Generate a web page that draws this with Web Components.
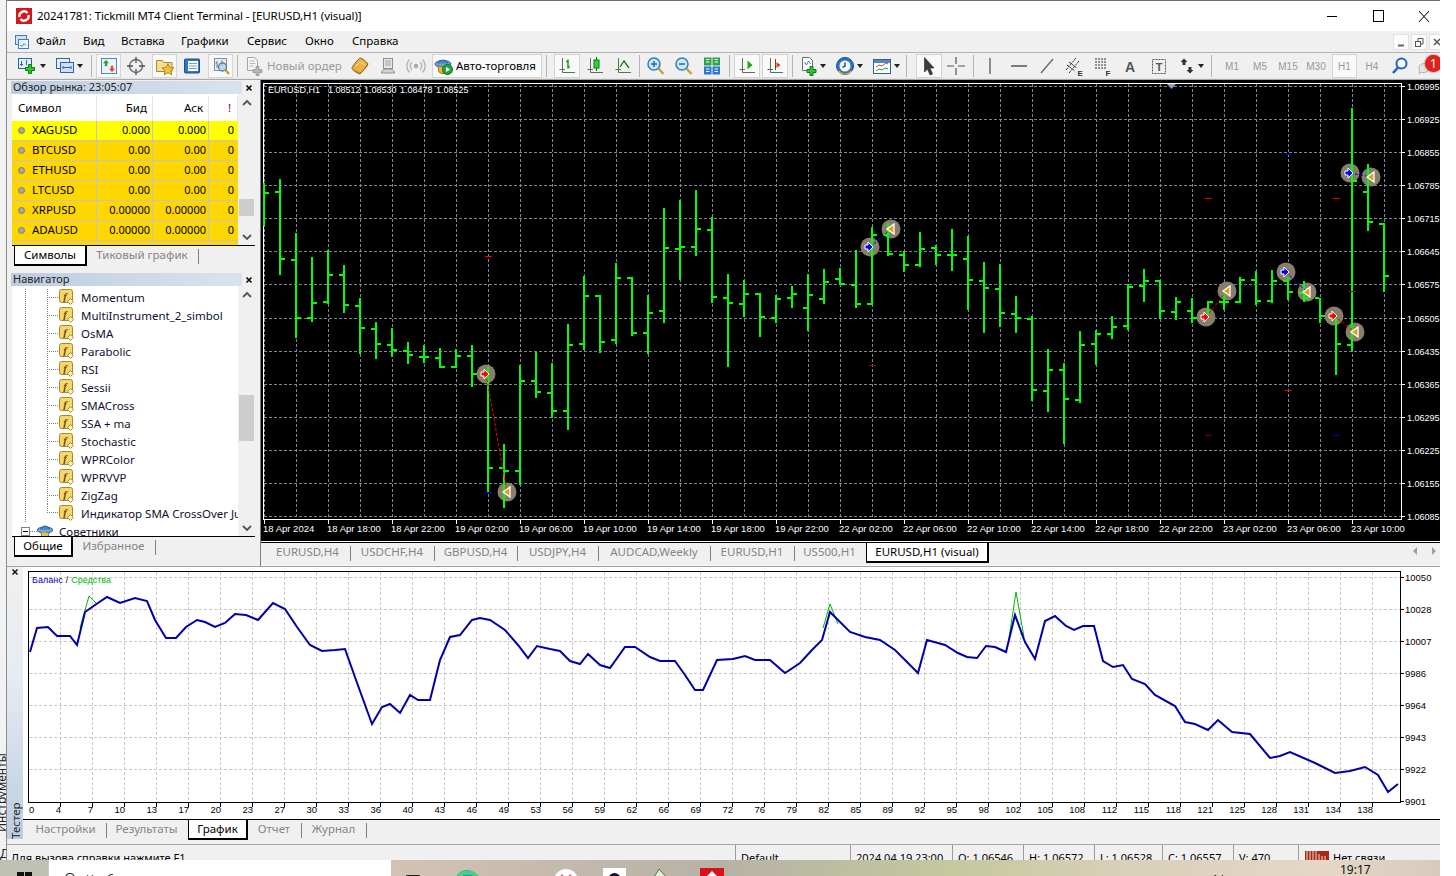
<!DOCTYPE html>
<html lang="ru">
<head>
<meta charset="utf-8">
<title>MT4</title>
<style>
  html, body { margin: 0; padding: 0; background: #fff; }
  body {
    width: 1456px; height: 876px; overflow: hidden;
    font: 11.5px "Noto Sans", "Liberation Sans", sans-serif; color: #000;
    display: grid; grid-template-rows: 860px 16px;
  }
</style>
</head>
<body>
<mt-desktop>
  <mt-strip></mt-strip>
  <mt-window>
    <mt-titlebar label="20241781: Tickmill MT4 Client Terminal - [EURUSD,H1 (visual)]"></mt-titlebar>
    <mt-menubar>
      <mt-menu style="width:47px">Файл</mt-menu>
      <mt-menu style="width:38px">Вид</mt-menu>
      <mt-menu style="width:60px">Вставка</mt-menu>
      <mt-menu style="width:66px">Графики</mt-menu>
      <mt-menu style="width:58px">Сервис</mt-menu>
      <mt-menu style="width:47px">Окно</mt-menu>
      <mt-menu style="width:60px">Справка</mt-menu>
    </mt-menubar>
    <mt-toolbar>
      <mt-tool icon="newchart" style="margin-left:10px;width:20px"></mt-tool>
      <mt-drop style="width:12px"></mt-drop>
      <mt-tool icon="profiles" style="margin-left:6px;width:19px"></mt-tool>
      <mt-drop style="width:12px"></mt-drop>
      <mt-sep style="width:10px"></mt-sep>
      <mt-tool icon="market" pressed style="width:25px"></mt-tool>
      <mt-tool icon="target" style="width:30px"></mt-tool>
      <mt-tool icon="favorites" pressed style="margin-left:1px;width:25px"></mt-tool>
      <mt-tool icon="terminal" style="width:30px"></mt-tool>
      <mt-tool icon="tester" pressed style="margin-left:1px;width:25px"></mt-tool>
      <mt-sep style="width:8px"></mt-sep>
      <mt-tool icon="neworder" style="margin-left:4px;width:18px"></mt-tool>
      <mt-tool muted style="margin-left:4px;width:77px;justify-content:flex-start">Новый ордер</mt-tool>
      <mt-tool icon="gold" style="width:32px"></mt-tool>
      <mt-tool icon="person" style="width:24px"></mt-tool>
      <mt-tool icon="signal" style="margin-left:4px;width:24px"></mt-tool>
      <mt-tool icon="auto" pressed style="margin-left:4px;width:110px;justify-content:flex-start">Авто-торговля</mt-tool>
      <mt-sep style="width:8px"></mt-sep>
      <mt-tool icon="bars" pressed style="margin-left:4px;width:26px"></mt-tool>
      <mt-tool icon="candles" style="width:30px"></mt-tool>
      <mt-tool icon="line" style="width:26px"></mt-tool>
      <mt-sep style="width:6px"></mt-sep>
      <mt-tool icon="zoomin" style="width:28px"></mt-tool>
      <mt-tool icon="zoomout" style="width:28px"></mt-tool>
      <mt-tool icon="tile" style="width:28px"></mt-tool>
      <mt-sep style="width:6px"></mt-sep>
      <mt-tool icon="shift" pressed style="margin-left:2px;width:26px"></mt-tool>
      <mt-tool icon="scroll" pressed style="margin-left:2px;width:26px"></mt-tool>
      <mt-sep style="width:8px"></mt-sep>
      <mt-tool icon="indicators" style="margin-left:3px;width:20px"></mt-tool>
      <mt-drop style="width:8px"></mt-drop>
      <mt-tool icon="clock" style="margin-left:8px;width:20px"></mt-tool>
      <mt-drop style="width:10px"></mt-drop>
      <mt-tool icon="template" style="margin-left:7px;width:20px"></mt-tool>
      <mt-drop style="width:10px"></mt-drop>
      <mt-sep style="width:8px"></mt-sep>
      <mt-tool icon="cursor" pressed style="margin-left:6px;width:26px"></mt-tool>
      <mt-tool icon="cross" style="width:28px"></mt-tool>
      <mt-sep style="width:6px"></mt-sep>
      <mt-tool icon="vline" style="width:28px"></mt-tool>
      <mt-tool icon="hline" style="width:30px"></mt-tool>
      <mt-tool icon="trend" style="width:26px"></mt-tool>
      <mt-tool icon="channel" style="width:28px"></mt-tool>
      <mt-tool icon="fibo" style="width:28px"></mt-tool>
      <mt-tool icon="letter" style="width:28px"></mt-tool>
      <mt-tool icon="label" style="width:30px"></mt-tool>
      <mt-tool icon="arrows" style="margin-left:2px;width:22px"></mt-tool>
      <mt-drop style="width:6px"></mt-drop>
      <mt-sep style="width:14px"></mt-sep>
      <mt-tool period style="width:28px">M1</mt-tool>
      <mt-tool period style="width:28px">M5</mt-tool>
      <mt-tool period style="width:28px">M15</mt-tool>
      <mt-tool period style="width:28px">M30</mt-tool>
      <mt-tool period pressed style="margin-left:2px;width:25px">H1</mt-tool>
      <mt-tool period style="width:30px">H4</mt-tool>
      <mt-tool icon="search" style="width:26px"></mt-tool>
      <mt-tool icon="bubble" style="width:27px"><mt-badge>1</mt-badge></mt-tool>
    </mt-toolbar>
    <mt-workspace>
      <mt-dock>
        <mt-market-watch></mt-market-watch>
        <mt-navigator></mt-navigator>
      </mt-dock>
      <mt-chart-area>
        <mt-chart></mt-chart>
        <mt-tabbar scroll>
          <mt-tab style="margin-left:5px;width:85px">EURUSD,H4</mt-tab>
          <mt-tab style="width:84px">USDCHF,H4</mt-tab>
          <mt-tab style="width:83px">GBPUSD,H4</mt-tab>
          <mt-tab style="width:81px">USDJPY,H4</mt-tab>
          <mt-tab style="width:112px">AUDCAD,Weekly</mt-tab>
          <mt-tab style="width:84px">EURUSD,H1</mt-tab>
          <mt-tab plain style="width:71px">US500,H1</mt-tab>
          <mt-tab active style="width:123px">EURUSD,H1 (visual)</mt-tab>
        </mt-tabbar>
      </mt-chart-area>
    </mt-workspace>
    <mt-tester>
      <mt-balance></mt-balance>
      <mt-tabbar>
        <mt-tab style="margin-left:3px;width:81px">Настройки</mt-tab>
        <mt-tab plain style="width:81px">Результаты</mt-tab>
        <mt-tab active style="width:60px">График</mt-tab>
        <mt-tab style="width:54px">Отчет</mt-tab>
        <mt-tab style="width:65px">Журнал</mt-tab>
      </mt-tabbar>
    </mt-tester>
    <mt-statusbar>
      <mt-cell style="width:729px">Для вызова справки нажмите F1</mt-cell>
      <mt-cell style="width:115px">Default</mt-cell>
      <mt-cell style="width:102px">2024.04.19 23:00</mt-cell>
      <mt-cell style="width:71px">O: 1.06546</mt-cell>
      <mt-cell style="width:71px">H: 1.06572</mt-cell>
      <mt-cell style="width:68px">L: 1.06528</mt-cell>
      <mt-cell style="width:71px">C: 1.06557</mt-cell>
      <mt-cell style="width:65px">V: 470</mt-cell>
      <mt-cell conn style="width:134px">Нет связи</mt-cell>
    </mt-statusbar>
  </mt-window>
</mt-desktop>
<mt-taskbar></mt-taskbar>

<script>
// base class: own open shadow root, filled once on connect
class Shadowed extends HTMLElement {
  connectedCallback() {
    if (this.shadowRoot) return;
    this.attachShadow({ mode: 'open' });
    this.shadowRoot.innerHTML = `<style>${this.css()}</style>${this.html()}`;
  }
  css() { return ':host{display:block}'; }
  html() { return '<slot></slot>'; }
}
const reg = (name, css, html) => customElements.define(name, class extends Shadowed {
  css() { return typeof css === 'function' ? css.call(this) : css; }
  html() { return html ? html.call(this) : '<slot></slot>'; }
});

const svg = (inner, w = 20, h = 20, box) =>
  `<svg width="${w}" height="${h}" viewBox="${box || `0 0 ${w} ${h}`}" xmlns="http://www.w3.org/2000/svg">${inner}</svg>`;

const axes = '<path d="M5.500 2v14.500H18M2.500 13.500H8" fill="none" stroke="#5c6f5c"/>';
const ICONS = {
  newchart: '<rect x="1.500" y="2.500" width="13" height="10" fill="#e3eefa" stroke="#2f64a6"/><path d="M4.500 5v5M3 8.500h3M9.500 4v5" stroke="#2f64a6"/><path d="M10.500 8.500h3v-3h3v3h3v3h-3v3h-3v-3h-3z" transform="translate(-2 3)" fill="#2fc62f" stroke="#0c7d0c"/>',
  profiles: '<rect x="1.500" y="2.500" width="13" height="10" fill="#e3eefa" stroke="#2f64a6"/><rect x="5.500" y="6.500" width="13" height="10" fill="#cfe0f4" stroke="#2f64a6"/><path d="M8 11.500h8M8 10v3M16 10v3" stroke="#2f64a6"/>',
  market: '<rect x="2.500" y="2.500" width="15" height="15" fill="#eaf3fb" stroke="#4a86c5"/><path d="M7 3.500l3.500 4H8.500v3h-3v-3H3.500z" fill="#22a522" stroke="#fff" stroke-width=".5"/><path d="M13 16.500l-3.500-4h2v-3h3v3h2z" fill="#e2452c" stroke="#fff" stroke-width=".5"/>',
  target: '<circle cx="10" cy="10" r="6.500" fill="none" stroke="#6d6d6d" stroke-width="1.400"/><path d="M10 1v6M10 13v6M1 10h6M13 10h6" stroke="#4f4f4f" stroke-width="1.300"/>',
  favorites: '<path d="M1.500 4.500h6l1.500 2h8v9h-15.500z" fill="#f7dd8a" stroke="#a88b3c"/><path d="M13 7.500l1.800 3.800 4.200.500-3 2.900.8 4.100-3.800-2-3.800 2 .8-4.100-3-2.900 4.200-.500z" fill="#f2c230" stroke="#9a7b1c" stroke-width=".8"/>',
  terminal: '<rect x="2.500" y="3" width="15" height="14" rx="1" fill="#2f78c8" stroke="#1b4f8d"/><rect x="6" y="5" width="10" height="10" fill="#fff"/><path d="M7 7.500h8M7 10h8M7 12.500h8" stroke="#6f9fd4"/>',
  tester: '<rect x="3.500" y="2.500" width="12" height="12" fill="#e8eef6" stroke="#7d8ea3"/><path d="M6 5v7M6 7H4.500M6 10h1.500M11 4v6" stroke="#6f7f91"/><circle cx="11.500" cy="11" r="4" fill="#a9ccee" fill-opacity=".7" stroke="#5c7da0" stroke-width="1.300"/><path d="M14.500 14l3.500 4" stroke="#c79a2e" stroke-width="2.200"/>',
  neworder: '<path d="M3.500 1.500h7l3 3v10h-10z" fill="#f4f4f4" stroke="#a5a5a5"/><path d="M5.500 5h5M5.500 7.500h6M5.500 10h4" stroke="#b8b8b8"/><path d="M12 10.500h3v3h3v3h-3v3h-3v-3H9v-3h3z" fill="#b5b5b5" stroke="#8e8e8e" stroke-width=".7"/>',
  gold: '<path d="M2 12c0-1 5-8 8-10 2 0 7 4 8 6-1 2-6 8-8 10-3-1-8-4-8-6z" fill="#eab245" stroke="#7e5a12"/><path d="M2 12l8 6 8-10-1 3-7 6z" fill="#9a6c16"/><path d="M6 10l4-4 5 3" fill="none" stroke="#f7dc91"/>',
  person: '<rect x="5.500" y="2.500" width="9" height="10" fill="#e6e6e6" stroke="#8f8f8f"/><path d="M7 5h6M7 7h6M7 9h6" stroke="#a5a5a5"/><path d="M3.500 17c0-3 3-4 6.500-4s6.500 1 6.500 4z" fill="#d3d3d3" stroke="#909090"/>',
  signal: '<circle cx="10" cy="10" r="2.200" fill="#a9a9a9"/><path d="M6 14a5.500 5.500 0 0 1 0-8M14 6a5.500 5.500 0 0 1 0 8M3.600 16.500a9 9 0 0 1 0-13M16.400 3.500a9 9 0 0 1 0 13" fill="none" stroke="#b7b7b7" stroke-width="1.500"/>',
  auto: '<ellipse cx="9" cy="8" rx="8" ry="3.500" fill="#6fa3d8" stroke="#2d6096"/><path d="M4 7.500c.5-4 9-5 10 0" fill="#3f86c9" stroke="#2d6096"/><path d="M4 10l1 6c2 2 6 2 8 0l1-5z" fill="#e8b93d" stroke="#947317"/><circle cx="13.500" cy="13.500" r="5" fill="#22a83a" stroke="#11702a"/><path d="M12 11v5l4-2.500z" fill="#fff"/>',
  bars: axes + '<path d="M11 3.500v9M9 5.500h2M11 11h2" fill="none" stroke="#0da10d" stroke-width="1.500"/>',
  candles: axes + '<path d="M11.500 1v14" stroke="#0b5f0b"/><rect x="9" y="4" width="5" height="8" fill="#2ed52e" stroke="#0b7d0b"/>',
  line: axes + '<path d="M7 11l4-6 5 7" fill="none" stroke="#157a15" stroke-width="1.300"/>',
  zoomin: '<circle cx="8" cy="8" r="6" fill="#cfe6fb" stroke="#2f7fc4" stroke-width="1.500"/><path d="M5 8h6M8 5v6" stroke="#1f6cb0" stroke-width="1.500"/><path d="M12.500 12.500l5 5.500" stroke="#c9a233" stroke-width="2.500"/>',
  zoomout: '<circle cx="8" cy="8" r="6" fill="#cfe6fb" stroke="#2f7fc4" stroke-width="1.500"/><path d="M5 8h6" stroke="#1f6cb0" stroke-width="1.500"/><path d="M12.500 12.500l5 5.500" stroke="#c9a233" stroke-width="2.500"/>',
  tile: '<rect x="2" y="1.500" width="7.500" height="8" fill="#31a24a"/><rect x="10.500" y="1.500" width="7.500" height="8" fill="#31a24a"/><rect x="2" y="10.500" width="7.500" height="8" fill="#2e78cf"/><rect x="10.500" y="10.500" width="7.500" height="8" fill="#2e78cf"/><path d="M4 3.500h3.500M12.500 3.500H16M4 6h3.500M12.500 6H16M4 13h3.500M12.500 13H16M4 15.500h3.500M12.500 15.500H16" stroke="#fff"/>',
  shift: axes + '<path d="M10.500 4.500v9l5-4.500z" fill="#1aa81a"/>',
  scroll: axes + '<path d="M10.500 3v11" stroke="#6a4a1a"/><path d="M11.500 9l4-3v6z" fill="#d93d1c" transform="rotate(180 13.500 9)"/>',
  indicators: '<path d="M3.500 1.500h7l3 3v10h-10z" fill="#fff" stroke="#6b6b6b"/><path d="M5.500 6l2 3 2-4 2 3" fill="none" stroke="#3f7fc4"/><path d="M11 10.500h3v3h3v3h-3v3h-3v-3H8v-3h3z" fill="#2fc62f" stroke="#0c7d0c"/>',
  clock: '<circle cx="10" cy="10" r="8.500" fill="#2b74c6" stroke="#184f8f"/><circle cx="10" cy="10" r="5.500" fill="#f3f8fd"/><path d="M10 6.500V10l-2.500 1.500" fill="none" stroke="#193f70" stroke-width="1.400"/><path d="M3.500 15a8.500 8.500 0 0 0 13 0" fill="none" stroke="#f0ac27" stroke-width="1.200"/>',
  template: '<rect x="1.500" y="3.500" width="17" height="14" fill="#fff" stroke="#385f8c"/><rect x="2" y="4" width="16" height="3" fill="#4f88c6"/><path d="M4 11l3-2 3 1 4-3 2 1" fill="none" stroke="#d4482c"/><path d="M4 15l3-2 3 1 3-2 3 1" fill="none" stroke="#2ba62b"/>',
  cursor: '<path d="M5.500 1.500l9.500 10.500H11l2.500 6-2.500 1-2.500-6-3 3z" fill="#3d3d3d" stroke="#222" stroke-width=".6"/>',
  cross: '<path d="M10 1v7M10 12v7M1 10h7M12 10h7" stroke="#555" stroke-width="1.200"/>',
  vline: '<path d="M10 2v16" stroke="#555" stroke-width="1.300"/>',
  hline: '<path d="M2 10h16" stroke="#555" stroke-width="1.500"/>',
  trend: '<path d="M4 17L16 3" stroke="#666" stroke-width="1.300"/>',
  channel: '<path d="M2 14L12 2M5 17L15 5M3 9l8 6M5 6l8 6" stroke="#333" fill="none" stroke-dasharray="2.500 .8"/><text x="13.500" y="19.500" font-size="8" font-weight="700" font-family="Liberation Sans" fill="#333">E</text>',
  fibo: '<path d="M3 3h12M3 6h12M3 9h12M3 12h12" stroke="#333" stroke-dasharray="2 1"/><text x="13.500" y="19.500" font-size="8" font-weight="700" font-family="Liberation Sans" fill="#333">F</text>',
  letter: '<text x="10" y="15.500" text-anchor="middle" font-size="14" font-weight="700" font-family="Liberation Sans" fill="#555">A</text>',
  label: '<rect x="3.500" y="3.500" width="13" height="14" fill="none" stroke="#555" stroke-dasharray="2 1"/><text x="10" y="15" text-anchor="middle" font-size="11" font-weight="700" font-family="Liberation Sans" fill="#555">T</text>',
  arrows: '<path d="M6 2.500l3.500 3.500H7.500v3h-3V6h-2z" fill="#333" transform="translate(1 0)"/><path d="M13 17.500l-3.500-3.500h2v-3h3v3h2z" fill="#333"/>',
  search: '<circle cx="11.500" cy="7.500" r="5" fill="#fff" stroke="#1f63c6" stroke-width="2"/><path d="M8 11.500L3 17" stroke="#1f63c6" stroke-width="2.600"/>',
  bubble: '<path d="M3 12a5 4.500 0 1 1 5 4.500H5l-2 1.500.5-2.500z" fill="#e4e4e4" stroke="#b4b4b4"/>'
};

const TAB_FONT = '11.5px "Noto Sans","Liberation Sans",sans-serif';

reg('mt-desktop', ':host{display:flex;width:1440px;height:860px;overflow:hidden}');

reg('mt-strip', `
  :host{display:flex;flex-direction:column;justify-content:flex-end;width:6px;flex:none;background:#f2f2f2;border-right:1px solid #8c8c8c;overflow:hidden}
  .v{writing-mode:vertical-rl;transform:rotate(180deg);font-size:12px;height:90px;margin-left:-7px;margin-bottom:14px;color:#222;white-space:nowrap}
  .d{font-size:13px;height:14px;line-height:14px;color:#222}
`, () => `<span class="v">Инструменты</span><span class="d">Д</span>`);

reg('mt-window', ':host{display:flex;flex-direction:column;width:1433px;height:860px;background:#f0f0f0;overflow:hidden}');

reg('mt-titlebar', `
  :host{display:flex;align-items:center;height:30px;flex:none;background:#fff;border-top:1px solid #707070;overflow:hidden}
  .logo{margin-left:9px;margin-right:5px;flex:none;display:block}
  .t{flex:1;font-size:11.5px;letter-spacing:-.1px;white-space:nowrap;padding-bottom:2px}
  .c{display:flex;margin-right:-7px;flex:none}
  .c svg{display:block}
`, function () {
  return svg('<rect width="16" height="16" fill="#d5161d"/><path d="M3.500 9a4.600 4.600 0 0 1 8-4" fill="none" stroke="#fff" stroke-width="2.400"/><path d="M12.500 7a4.600 4.600 0 0 1-8 4" fill="none" stroke="#fff" stroke-width="2.400"/>', 16, 16).replace('<svg', '<svg class="logo"') +
    `<span class="t">${this.getAttribute('label')}</span><div class="c">` +
    svg('<path d="M18 15.500h10" stroke="#000"/>', 46, 30) +
    svg('<rect x="18.500" y="9.500" width="10" height="11" fill="none" stroke="#000"/>', 46, 30) +
    svg('<path d="M18 10l10 11M28 10L18 21" stroke="#000"/>', 46, 30) + '</div>';
});

reg('mt-menubar', `
  :host{display:flex;align-items:center;height:21px;flex:none;background:#f0f0f0;overflow:hidden}
  .ico{flex:none;margin:0 6px 0 7px;display:block}
  .mdi{margin-left:auto;display:flex;gap:2px;margin-right:-5px}
  .b{width:16px;height:16px;background:#fbfbfb;border:1px solid #e2e2e2;box-sizing:border-box;flex:none}
  .b svg{display:block}
`, () => svg('<rect x="1.500" y="1.500" width="11" height="9" fill="#cfe2f6" stroke="#3e7fc4"/><rect x="4.500" y="5.500" width="10" height="9" fill="#eef5fc" stroke="#3e7fc4"/><path d="M6 11l2 1.500 2-3 2 2" fill="none" stroke="#3e7fc4"/>', 16, 16).replace('<svg', '<svg class="ico"') + `<slot></slot><div class="mdi">
  <div class="b">${svg('<path d="M4 10.500h6" stroke="#666" stroke-width="2"/>', 14, 14)}</div>
  <div class="b">${svg('<rect x="3.500" y="6.500" width="5" height="5" fill="none" stroke="#555"/><path d="M6 6V3.500h5V9H9" fill="none" stroke="#555"/>', 14, 14)}</div>
  <div class="b">${svg('<path d="M4 4l6 6M10 4l-6 6" stroke="#555" stroke-width="1.500"/>', 14, 14)}</div></div>`);

reg('mt-menu', ':host{display:block;flex:none;font-size:11.5px;white-space:nowrap;margin-top:-2px}');

reg('mt-toolbar', ':host{display:flex;align-items:center;height:26px;flex:none;background:#f0f0f0;border-top:1px solid #b4b4b4;border-bottom:1px solid #a8a8a8;overflow:hidden;box-shadow:inset 0 -1px 0 #e4e4e4}');

reg('mt-tool', function () {
  const p = this.hasAttribute('pressed');
  const period = this.hasAttribute('period');
  return `
  :host{display:flex;align-items:center;justify-content:center;height:24px;flex:none;box-sizing:border-box;white-space:nowrap;position:relative;
    font-size:${period ? 10 : 11.5}px;${period ? 'font-family:"Liberation Sans",sans-serif;' : 'padding-bottom:2px;'}
    color:${period || this.hasAttribute('muted') ? '#9a9a9a' : '#000'};
    ${p ? 'background:#f9f9f9;border:1px solid #d4d4d4;' : ''}}
  svg{flex:none;display:block}
  .ic{margin:2px ${this.textContent.trim() ? '2px 0 1px' : '0 0'}}
  `;
}, function () {
  const name = this.getAttribute('icon');
  return (name ? svg(ICONS[name]).replace('<svg', '<svg class="ic"') : '') + '<slot></slot>';
});

reg('mt-badge', `
  :host{position:absolute;left:12px;top:1px;width:17px;height:17px;border-radius:50%;background:#e1221c;color:#fff;font-size:12px;line-height:17px;text-align:center;box-shadow:0 0 2px #a33}
`);

reg('mt-drop', `
  :host{display:flex;align-items:center;justify-content:center;flex:none;height:24px}
  i{border:3px solid transparent;border-top:4px solid #222;border-bottom:0;display:block}
`, () => '<i></i>');

reg('mt-sep', `
  :host{display:flex;align-items:center;justify-content:center;flex:none;height:24px}
  i{width:1px;height:22px;background:#b4b4b4;display:block}
`, () => '<i></i>');

reg('mt-workspace', ':host{display:flex;flex:none;height:486px;background:#f0f0f0}');
reg('mt-dock', ':host{display:flex;flex-direction:column;flex:none;width:254px;box-sizing:border-box;padding:1px 0 0 4px;border-right:1px solid #7f7f7f}');
reg('mt-chart-area', ':host{display:flex;flex-direction:column;width:1179px;flex:none;gap:1px;background:#fafafa}');

// side panel shell: caption, body slot
reg('mt-panel', `
  :host{display:block;width:244px;flex:none}
  .cap{display:flex;height:13px;align-items:center}
  .t{width:231px;height:13px;line-height:12px;padding-left:2px;box-sizing:border-box;font-size:11px;color:#222;white-space:nowrap;overflow:hidden;
     background:linear-gradient(90deg,#bccde0,#d9e3ee)}
  .x{flex:1;display:flex;justify-content:center}
  svg{display:block}
`, function () {
  return `<div class="cap"><div class="t">${this.getAttribute('label')}</div><div class="x">${svg('<path d="M1.500 1.500l5 5M6.500 1.500l-5 5" stroke="#111" stroke-width="1.700"/>', 8, 8)}</div></div><slot></slot>`;
});

reg('mt-scrollbar', `
  :host{display:flex;flex-direction:column;align-items:stretch;width:15px;flex:none;background:#f0f0f0;box-sizing:border-box;margin-left:1px}
  .a{height:17px;flex:none;display:flex;align-items:center;justify-content:center}
  .m{flex:1;display:flex;flex-direction:column}
  .th{background:#cdcdcd;flex:none}
  svg{display:block}
`, function () {
  const top = this.getAttribute('top'), h = this.getAttribute('size');
  return `<div class="a">${svg('<path d="M1 6l4-4 4 4" fill="none" stroke="#555" stroke-width="1.800"/>', 10, 8)}</div>
   <div class="m"><div style="height:${top}px;flex:none"></div><div class="th" style="height:${h}px"></div></div>
   <div class="a">${svg('<path d="M1 2l4 4 4-4" fill="none" stroke="#555" stroke-width="1.800"/>', 10, 8)}</div>`;
});

reg('mt-market-watch', `
  :host{display:block;height:190px;flex:none}
  .body{display:flex;height:151px;margin-left:1px}
  .table{width:226px;flex:none;overflow:hidden;background:#fff;height:151px}
  .head,.row{display:grid;grid-template-columns:85px 56px 56px 29px;box-sizing:border-box}
  .head{height:27px;padding-top:1px;background:#fff;align-items:center}
  .head span{height:25px;line-height:23px;padding:0 5px;border-right:1px solid #e3e3e3;box-sizing:border-box;font-size:11.5px}
  .head span:first-child{padding-left:6px}
  .r{text-align:right}
  .row{height:20px}
  .row span{height:20px;line-height:17px;padding:0 2px 0 4px;border-right:1px solid #c4c4c4;border-bottom:1px solid #c4c4c4;box-sizing:border-box;font-size:11px;overflow:hidden;white-space:nowrap}
  .row span:first-child{display:flex;align-items:center;padding:0 0 2px 6px;gap:7px;font-size:11.5px}
  .row span:last-child{border-right:0;padding-right:4px}
  .dot{width:7px;height:7px;border-radius:50%;background:#a6a6a6;border:1px solid #7b7b7b;box-sizing:border-box;flex:none;margin-top:1px}
`, () => {
  const rows = [['XAGUSD', '0.000', '#ffff00'], ['BTCUSD', '0.00', '#ffd700'], ['ETHUSD', '0.00', '#ffd700'], ['LTCUSD', '0.00', '#ffd700'], ['XRPUSD', '0.00000', '#ffd700'], ['ADAUSD', '0.00000', '#ffd700'], ['', '', '#ffd700']];
  return `<mt-panel label="Обзор рынка: 23:05:07">
    <div class="body"><div class="table">
      <div class="head"><span>Символ</span><span class="r">Бид</span><span class="r">Аск</span><span class="r" style="color:#7a0000;padding-right:6px">!</span></div>
      ${rows.map(r => `<div class="row" style="background:${r[2]}"><span>${r[0] ? '<i class="dot"></i>' : ''}${r[0]}</span><span class="r">${r[1]}</span><span class="r">${r[1]}</span><span class="r">${r[0] ? '0' : ''}</span></div>`).join('')}
    </div><mt-scrollbar top="88" size="17"></mt-scrollbar></div>
    <mt-tabbar dock>
      <mt-tab active style="margin-left:2px;width:73px">Символы</mt-tab>
      <mt-tab style="width:112px">Тиковый график</mt-tab>
    </mt-tabbar>
  </mt-panel>`;
});

reg('mt-navigator', `
  :host{display:block;flex:none;margin-top:2px}
  .body{display:flex;height:250px;margin-left:1px}
  .tree{width:226px;flex:none;overflow:hidden;background:#fff;box-sizing:border-box;padding-top:2px;height:250px}
`, () => {
  const names = ['Momentum', 'MultiInstrument_2_simbol', 'OsMA', 'Parabolic', 'RSI', 'Sessii', 'SMACross', 'SSA + ma', 'Stochastic', 'WPRColor', 'WPRVVP', 'ZigZag', 'Индикатор SMA CrossOver Just'];
  return `<mt-panel label="Навигатор"><div class="body"><div class="tree">
    ${names.map((n, i) => `<mt-tree-row${i === names.length - 1 ? ' last' : ''}>${n}</mt-tree-row>`).join('')}
    <mt-tree-root>Советники</mt-tree-root>
  </div><mt-scrollbar top="92" size="46"></mt-scrollbar></div>
  <mt-tabbar dock>
    <mt-tab active style="margin-left:2px;width:59px">Общие</mt-tab>
    <mt-tab style="width:83px">Избранное</mt-tab>
  </mt-tabbar></mt-panel>`;
});

const DOTS_V = 'repeating-linear-gradient(0deg,#7d7d7d 0 1px,transparent 1px 2px)';
const DOTS_H = 'repeating-linear-gradient(90deg,#7d7d7d 0 1px,transparent 1px 2px)';

reg('mt-tree-row', function () {
  return `
  :host{display:flex;align-items:center;height:18px;font-size:11.5px;white-space:nowrap;color:#101030}
  .g1{width:1px;height:18px;margin-left:13px;background:${DOTS_V};flex:none}
  .g2{width:12px;height:${this.hasAttribute('last') ? 9 : 18}px;margin-left:21px;align-self:flex-start;flex:none;
      background:${DOTS_V} left top/1px 100% no-repeat,${DOTS_H} left ${this.hasAttribute('last') ? 'bottom' : 'center'}/100% 1px no-repeat}
  svg{flex:none;display:block;margin:0 6px 0 0}
  `;
}, () => `<i class="g1"></i><i class="g2"></i>` + svg(`<rect x=".5" y=".5" width="13" height="13" rx="2" fill="#f7d66b" stroke="#a98a2b"/><text x="6" y="11" text-anchor="middle" font-family="Liberation Serif" font-style="italic" font-weight="700" font-size="11" fill="#6a4f0c">f</text><path d="M11.500 9.500l3 3-3 3-3-3z" fill="#fff3c4" stroke="#a98a2b"/>`, 16, 16) + '<slot></slot>');

reg('mt-tree-root', `
  :host{display:flex;align-items:center;height:18px;font-size:11.5px;white-space:nowrap;color:#101030}
  .box{width:9px;height:9px;margin-left:9px;flex:none;display:block}
  .h{width:7px;height:1px;background:${DOTS_H};flex:none}
  svg.hat{flex:none;display:block;margin:0 6px 0 0}
`, () => svg('<rect x=".5" y=".5" width="8" height="8" fill="#fff" stroke="#808080"/><path d="M2 4.500h5" stroke="#000"/>', 9, 9).replace('<svg', '<svg class="box"') + '<i class="h"></i>' +
  svg('<ellipse cx="8" cy="7" rx="8" ry="3" fill="#6fa6de" stroke="#2d6096"/><path d="M3.500 6.500c.5-4 8-5 9 0" fill="#3f86c9" stroke="#2d6096"/><path d="M4 9l1 6h6l1-5" fill="#e8c04d" stroke="#947317"/>', 16, 16).replace('<svg', '<svg class="hat"') + '<slot></slot>');

reg('mt-tabbar', function () {
  const dock = this.hasAttribute('dock');
  return `
  :host{display:flex;flex:none;height:23px;box-sizing:border-box;border-top:1px solid #000;background:#f0f0f0;overflow:hidden;${dock ? 'margin-left:1px;' : ''}}
  .sc{margin-left:auto;display:flex;gap:13px;padding:4px 0 0 0;flex:none;width:29px;margin-right:-1px}
  .sc svg{display:block}
  `;
}, function () {
  return '<slot></slot>' + (this.hasAttribute('scroll') ? `<div class="sc">${svg('<path d="M5 0v8L1 4z" fill="#a0a0a0"/>', 6, 8)}${svg('<path d="M1 0v8l4-4z" fill="#a0a0a0"/>', 6, 8)}</div>` : '');
});

reg('mt-tab', function () {
  const a = this.hasAttribute('active');
  return `
  :host{display:block;flex:none;box-sizing:border-box;height:${a ? 20 : 18}px;font:${TAB_FONT};white-space:nowrap;text-align:center;
    line-height:${a ? 17 : 16}px;
    ${a ? 'background:#fff;color:#000;border:1px solid #000;border-top:0;border-right-width:2px;border-bottom-width:2px;'
        : `color:#858585;padding-right:2px;margin-top:1px;${this.hasAttribute('plain') ? '' : 'background:linear-gradient(#808080,#808080) right center/1px 15px no-repeat;'}`}}
  `;
});

reg('mt-chart', ':host{display:block;height:461px;flex:none;background:#000}svg{display:block}', () => {
  const z11 = [[40,168,null,68],[28,315,65,267],[189,503,270,443],[262,455,443,399],[241,402,396,315],[286,428,315,405],[385,552,408,474],[457,567,477,522],[475,561,525,540],[517,582,543,555],[526,579,561,561],[535,594,564,591],[538,594,591,558],[526,651,558,612],[591,966,612,894],[823,1014,894,903],[586,945,903,633],[546,684,633,666],[580,744,669,723],[463,780,723,525],[319,540,522,378],[376,549,378,516],[280,522,510,324],[322,498,324,489],[376,552,489,429],[115,459,423,234],[91,330,237,231],[61,258,231,177],[142,399,180,381],[313,591,384,399]];
  const z12 = [[331,441,402,372],[370,501,372,441],[376,459,444,387],[349,414,384,372],[313,483,414,375],[298,402,387,336],[295,345,327,342],[241,414,345,402],[172,405,402,195],[160,258,195,252],[244,306,255,285],[187,291,285,237],[226,285,234,255],[178,303,255,255],[199,420,267,330],[277,489,333,354],[283,471,357,429],[379,489,432,444],[439,693,447,660],[538,726,663,600],[580,822,600,687],[484,699,690,525],[481,585,522,492],[439,507,492,471],[343,480,468,351],[298,396,348,333],[331,447,333,423],[382,450,426,396]];
  const z6 = [[655,729,693,714],[664,714,714,666],[640,690,666,666],[590,668,666,599],[574,675,600,663],[571,668,663,603],[590,660,603,636],[604,665,639,654],[654,729,654,708],[714,885,708,792],[84,814,795,303],[253,453,336,426],[430,636,432,588]];
  let bars = '', x = 264;
  const add = (list, oy) => list.forEach(b => {
    const y = v => Math.round(oy + v / 3);
    bars += `<rect x="${x - 1}" y="${y(b[0])}" width="2" height="${y(b[1]) - y(b[0])}"/>`;
    if (b[2] !== null) bars += `<rect x="${x - 5}" y="${y(b[2]) - 1}" width="4" height="2"/>`;
    bars += `<rect x="${x + 1}" y="${y(b[3]) - 1}" width="4" height="2"/>`;
    x += 16;
  });
  add(z11, 170);
  add(z12, 170);
  add(z6, 80);

  const ys = [86, 119, 152, 185, 218, 251, 284, 318, 351, 384, 417, 450, 483, 516];
  const px = ['1.06995', '1.06925', '1.06855', '1.06785', '1.06715', '1.06645', '1.06575', '1.06505', '1.06435', '1.06365', '1.06295', '1.06225', '1.06155', '1.06085'];
  let grid = '', labels = '';
  ys.forEach((v, i) => {
    grid += `<path d="M264 ${v + .5}H1401" />`;
    labels += `<path d="M1401 ${v + .5}h4" stroke="#fff"/><text x="1407" y="${v + 4}" font-size="9">${px[i]}</text>`;
  });
  for (let k = 264; k < 1400; k += 32) grid += `<path d="M${k + .5} 84V519"/>`;
  const dates = ['18 Apr 2024', '18 Apr 18:00', '18 Apr 22:00', '19 Apr 02:00', '19 Apr 06:00', '19 Apr 10:00', '19 Apr 14:00', '19 Apr 18:00', '19 Apr 22:00', '22 Apr 02:00', '22 Apr 06:00', '22 Apr 10:00', '22 Apr 14:00', '22 Apr 18:00', '22 Apr 22:00', '23 Apr 02:00', '23 Apr 06:00', '23 Apr 10:00'];
  dates.forEach((d, i) => {
    const dx = 263 + i * 64;
    labels += `<path d="M${dx + 1.5} 519v5" stroke="#fff"/><text x="${dx}" y="532" font-size="9.500">${d}</text>`;
  });

  const trades = [[486, 374, 507, 492, '#f00'], [870, 247, 891, 229, '#00f'], [1206, 317, 1227, 291, '#f00'], [1286, 272, 1307, 292, '#00f'], [1334, 316, 1355, 332, '#f00'], [1350, 173, 1371, 177, '#00f']];
  let discs = '', marks = '';
  trades.forEach(t => {
    discs += `<circle cx="${t[0]}" cy="${t[1]}" r="9.500" fill="#897d6e"/><circle cx="${t[2]}" cy="${t[3]}" r="9.500" fill="#897d6e"/>`;
    marks += `<path d="M${t[0]} ${t[1]}L${t[2]} ${t[3]}" stroke="${t[4]}" stroke-dasharray="3 2" fill="none"/>`;
    marks += `<path transform="translate(${t[0] - 1} ${t[1]})" d="M-4-2h3v-3l5 5-5 5v-3h-3z" fill="${t[4]}" stroke="#fff"/>`;
    marks += `<path transform="translate(${t[2] - 1} ${t[3]})" d="M4-5L-3 0 4 5z" fill="#e69c1e" stroke="#fff" stroke-width="1.300"/>`;
  });
  const dashes = [[485, 256, '#f00'], [485, 492, '#00f'], [869, 365, '#a00'], [1205, 198, '#e00'], [1333, 198, '#e00'], [1285, 154, '#00c'], [1349, 291, '#a00'], [1285, 390, '#e00'], [1333, 435, '#00c'], [1205, 435, '#700']]
    .map(d => `<rect x="${d[0]}" y="${d[1]}" width="7" height="1" fill="${d[2]}" shape-rendering="crispEdges"/>`).join('');

  return `<svg width="1179" height="461" viewBox="261 80 1179 461" font-family="Liberation Sans" fill="#fff">
    <g stroke="#778899" stroke-dasharray="3 2" shape-rendering="crispEdges" fill="none">${grid}</g>
    <path d="M263.500 83.500H1401.500V519.500H263.500z" stroke="#fff" fill="none" shape-rendering="crispEdges"/>
    ${discs}
    <g fill="#0f0" shape-rendering="crispEdges">${bars}</g>
    ${dashes}${marks}
    <g shape-rendering="crispEdges">${labels}</g>
    <text font-size="9" y="93"><tspan x="268">EURUSD,H1</tspan><tspan x="328">1.08512</tspan><tspan x="364">1.08530</tspan><tspan x="400">1.08478</tspan><tspan x="436">1.08525</tspan></text>
    <path d="M1167 84h9l-4.500 5z" fill="#8ba0b4"/>
  </svg>`;
});

reg('mt-tester', `
  :host{display:grid;grid-template-columns:16px 1fr;flex:none;height:278px;background:#f0f0f0;border-top:1px solid #a0a0a0;box-sizing:border-box}
  .side{display:flex;flex-direction:column;align-items:center;height:272px;background:linear-gradient(0deg,#bccde0,#e6ecf3 60%,#f0f0f0)}
  .x{height:10px;margin-top:1px;flex:none}
  .x svg{display:block}
  .lab{writing-mode:vertical-rl;transform:rotate(180deg);margin-top:auto;height:33px;font-size:11.5px;line-height:15px;color:#222;white-space:nowrap}
  .main{display:flex;flex-direction:column}
`, () => `<div class="side"><div class="x">${svg('<path d="M1.500 1.500l5 5M6.500 1.500l-5 5" stroke="#111" stroke-width="1.500"/>', 8, 8)}</div><div class="lab">Тестер</div></div><div class="main"><slot></slot></div>`);

reg('mt-balance', ':host{display:block;height:252px;flex:none;background:#fff}svg{display:block}', () => {
  const blue = [[30,652],[37,628],[48,627],[57,636],[70,636],[77,645],[85,612],[95,605],[107,597],[120,603],[135,598],[147,601],[155,620],[166,638],[176,638],[186,627],[197,620],[205,622],[215,627],[225,623],[235,614],[246,615],[258,620],[273,603],[285,609],[297,627],[310,645],[322,651],[335,650],[345,649],[356,680],[372,724],[382,707],[390,704],[400,713],[410,695],[418,700],[430,700],[440,660],[450,637],[460,635],[472,620],[480,618],[490,620],[505,630],[518,645],[528,658],[537,646],[550,649],[560,651],[570,661],[580,664],[588,654],[600,665],[610,668],[625,647],[635,647],[650,657],[660,661],[675,661],[685,675],[695,690],[703,690],[717,660],[733,659],[745,656],[755,660],[770,660],[785,673],[800,663],[812,650],[822,640],[830,612],[850,632],[865,637],[880,640],[895,650],[905,660],[918,673],[927,640],[945,645],[958,653],[967,657],[977,658],[986,646],[995,647],[1006,652],[1015,615],[1025,642],[1035,659],[1045,621],[1055,616],[1066,626],[1074,630],[1083,626],[1094,626],[1103,661],[1113,667],[1123,665],[1132,679],[1145,684],[1155,695],[1175,706],[1185,722],[1195,724],[1208,730],[1218,720],[1232,732],[1250,734],[1270,758],[1280,756],[1290,752],[1315,763],[1335,773],[1350,771],[1365,767],[1378,775],[1388,792],[1398,784]];
  const line = p => p.map(q => q.join(',')).join(' ');
  let grid = '', labels = '';
  [578, 610, 642, 674, 706, 738, 770].forEach(y => { grid += `<path d="M29 ${y - .5}H1400"/>`; });
  for (let k = 60; k < 1390; k += 32) grid += `<path d="M${k + .5} 572V802"/>`;
  const nums = [4,7,10,13,17,20,23,27,30,33,36,40,43,46,49,53,56,59,62,66,69,72,76,79,82,85,89,92,95,98,102,105,108,112,115,118,121,125,128,131,134,138];
  labels += `<text x="29" y="813">0</text>`;
  nums.forEach((n, i) => {
    const tx = 60 + i * 32;
    labels += `<path d="M${tx + .5} 803v4" stroke="#000" shape-rendering="crispEdges"/><text x="${tx + 1}" y="813" text-anchor="end">${n}</text>`;
  });
  [['10050', 578], ['10028', 610], ['10007', 642], ['9986', 674], ['9964', 706], ['9943', 738], ['9922', 770], ['9901', 802]].forEach(v => {
    labels += `<path d="M1400 ${v[1] - .5}h4" stroke="#000" shape-rendering="crispEdges"/><text x="1405" y="${v[1] + 3}">${v[0]}</text>`;
  });
  const green = [[[80,628],[89,596],[97,604]], [[823,628],[830,604],[838,624]], [[1009,638],[1016,592],[1024,637]]];
  return `<svg width="1417" height="252" viewBox="23 567 1417 252" font-family="Liberation Sans" font-size="9.500" fill="#000">
    <g stroke="#c8c8c8" stroke-dasharray="3 2" fill="none" shape-rendering="crispEdges">${grid}</g>
    <path d="M28.500 571.500H1400.500V802.500H28.500z" fill="none" stroke="#000" shape-rendering="crispEdges"/>
    ${green.map(g => `<polyline points="${line(g)}" fill="none" stroke="#00b400"/>`).join('')}
    <polyline points="${line(blue)}" fill="none" stroke="#0000a8" stroke-width="2"/>
    <text x="32" y="583" font-size="9"><tspan fill="#0000c8">Баланс</tspan><tspan fill="#000" dx="3">/</tspan><tspan fill="#00b400" dx="3">Средства</tspan></text>
    ${labels}
  </svg>`;
});

reg('mt-statusbar', ':host{display:flex;height:15px;flex:none;overflow:hidden;background:#f0f0f0;border-top:1px solid #a8a8a8}');

reg('mt-cell', `
  :host{display:flex;align-items:flex-start;flex:none;box-sizing:border-box;height:30px;padding:5px 0 0 5px;font-size:11px;line-height:15px;white-space:nowrap;border-right:1px solid #9c9c9c}
  :host(:first-child){padding-left:4px}
  :host(:last-child){border-right:0}
  svg{display:block;flex:none;margin:1px 4px 0 1px}
`, function () {
  return (this.hasAttribute('conn') ? svg('<rect width="24" height="9" fill="#a52a1a"/><path d="M2 0v9M5 0v9M8 0v9M11 0v9M14 0v9M17 0v9M20 0v9" stroke="#f3d9d0"/><path d="M12 0h12v3H12zM16 3h8v2h-8z" fill="#a52a1a"/>', 24, 9) : '') + '<slot></slot>';
});

reg('mt-taskbar', `
  :host{width:1440px;height:16px;overflow:hidden;display:flex;
    background:linear-gradient(90deg,#d9c8ba 0,#d2c2b4 28%,#b6b2a5 50%,#c4c89e 66%,#d8d0b8 78%,#e6d7c6 92%,#d8cbbc 100%)}
  .start{width:48px;flex:none;background:#bfc1b3;display:flex;justify-content:center;padding-top:12px;box-sizing:border-box}
  .start i{display:grid;grid-template-columns:7px 7px;gap:1px;height:7px}
  .start b{background:#111;height:7px;display:block}
  .search{width:342px;margin-left:1px;flex:none;background:#fff;display:flex;padding:12px 0 0 15px;box-sizing:border-box}
  .apps{position:relative;flex:1}
  .apps>*{position:absolute;display:block}
  .clock{left:949px;top:2px;font-size:12px;line-height:15px;color:#111;white-space:nowrap}
  .lang{left:897px;top:12px;font-size:11px;color:#111;line-height:15px}
`, () => `
  <div class="start"><i><b></b><b></b></i></div>
  <div class="search">${svg('<circle cx="6" cy="6" r="4.500" fill="none" stroke="#222" stroke-width="1.200"/>', 14, 14)}<span style="margin-left:8px;font-size:12px;line-height:16px;color:#333">Чтобы</span></div>
  <div class="apps">
    <span style="left:15px;top:11px">${svg('<path d="M.5 7V.5h13V7" fill="none" stroke="#222"/>', 14, 8)}</span>
    <span style="left:64px;top:8px">${svg('<circle cx="12" cy="12" r="12" fill="#1f9fc9"/><path d="M2 10a11 9 0 0 1 21-2" fill="none" stroke="#46d37c" stroke-width="4"/>', 24, 10)}</span>
    <span style="left:118px;top:10px">${svg('<path d="M0 2h8l2 2h12v8H0z" fill="#f0c23c"/>', 22, 8)}</span>
    <span style="left:163px;top:9px">${svg('<circle cx="12" cy="12" r="12" fill="#fff"/><path d="M5 9l3-4 3 4zM13 9l3-4 3 4z" fill="#ea4b6b"/>', 24, 12)}</span>
    <span style="left:212px;top:8px">${svg('<rect width="23" height="12" fill="#fff"/><circle cx="11.500" cy="11" r="6" fill="#101030"/>', 23, 12)}</span>
    <span style="left:257px;top:7px">${svg('<path d="M5 11L11 1l9 10z" fill="#ece8d8" stroke="#3a7f3a"/>', 24, 11)}</span>
    <span style="left:309px;top:8px">${svg('<rect width="24" height="14" fill="#d8121c"/><path d="M12 3l5 5h-3v6h-4V8H7z" fill="#fff"/>', 24, 14)}</span>
    <span style="left:790px;top:12px">${svg('<circle cx="11" cy="11" r="10" fill="#d2d94a" stroke="#4b9d5f" stroke-width="1.500"/>', 22, 8)}</span>
    <span style="left:821px;top:13px;font-size:11px;line-height:12px">1:)</span>
    <span style="left:843px;top:13px">${svg('<path d="M.5 7V.5h14V7M7.500 .5V7" fill="none" stroke="#222"/>', 16, 8)}</span>
    <span style="left:866px;top:13px">${svg('<path d="M.5 7V.5h20V7" fill="none" stroke="#222"/>', 22, 8)}</span>
    <span class="lang">РУС</span>
    <span class="clock">19:17</span>
    <span style="left:1009px;top:12px">${svg('<rect width="16" height="7" fill="#111"/><rect x="3" y="3" width="10" height="4" fill="#ddd"/>', 16, 7)}</span>
  </div>`);
</script>
</body>
</html>
